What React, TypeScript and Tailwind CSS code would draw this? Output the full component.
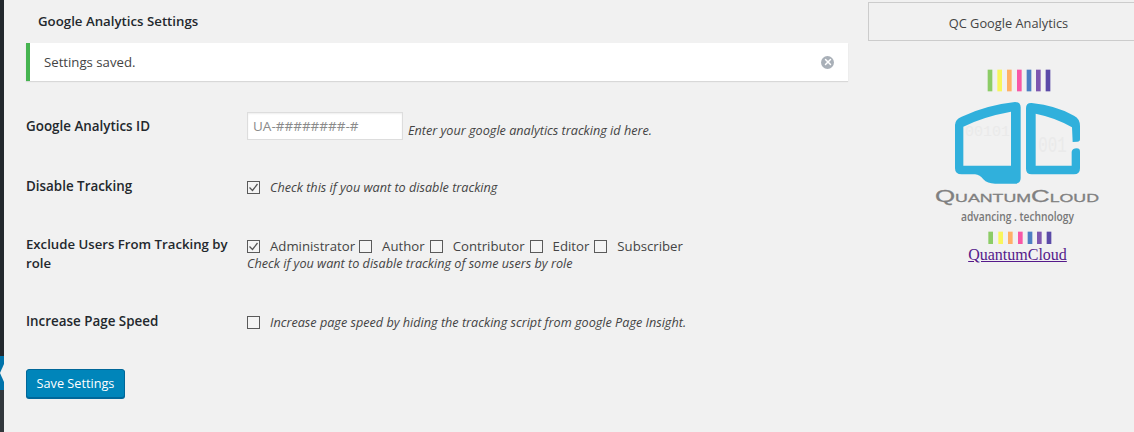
import { X } from "lucide-react";

const font = "font-['Open_Sans','Noto_Sans',sans-serif]";
const barColors = ["#8ccc66", "#f9f65c", "#ffb066", "#f857a6", "#4d7fc4", "#7e57b0", "#5b4aa8"];
const topBars = [263, 292, 321, 351, 380, 408, 437];
const lowBars = [265, 295, 324, 354, 383, 411, 440];

function Checkbox({ checked = false }: { checked?: boolean }) {
  return (
    <span className="flex h-[13px] w-[13px] shrink-0 items-center justify-center border border-[#5a5a5a] bg-[#f4f4f4]">
      {checked && (
        <svg width="11" height="11" viewBox="0 0 11 11" fill="none">
          <path d="M1.5 5.5L4.5 8.5L9.5 2" stroke="#555" strokeWidth="1.3" />
        </svg>
      )}
    </span>
  );
}

function RoleOption({ label, checked, gap }: { label: string; checked?: boolean; gap: string }) {
  return (
    <label className={`flex items-center gap-[10px] ${gap}`}>
      <Checkbox checked={checked} />
      <span>{label}</span>
    </label>
  );
}

function Logo() {
  return (
    <svg width="174" height="178" viewBox="90 201 522 534" className="block">
      {topBars.map((x, i) => (
        <rect key={x} x={x} y="209" width="14" height="65" fill={barColors[i]} />
      ))}
      <text x="195" y="408" fontSize="42" fill="#eaeaea" fontFamily="Liberation Mono, monospace" textLength="135" lengthAdjust="spacingAndGlyphs">00101</text>
      <text x="415" y="455" fontSize="66" fill="#eaeaea" fontFamily="Liberation Mono, monospace" textLength="85" lengthAdjust="spacingAndGlyphs">001</text>
      <path
        fillRule="evenodd"
        fill="#30b0dc"
        d="M165 375Q165 358 185 350Q260 315 345 306Q362 306 362 322L362 535Q362 551 345 551L285 551Q262 551 250 538Q240 525 225 523L185 523Q165 523 165 505ZM190 380Q250 350 333 335L333 497L190 497Z"
      />
      <path
        fill="#30b0dc"
        d="M378 325Q378 308 395 309Q470 317 522 347Q540 356 540 378L540 418Q540 425 532 425L518 426L516 382Q470 354 407 341L407 497L515 497L515 455Q518 445 530 445Q540 445 540 455L540 505Q540 523 522 523L395 523Q378 523 378 506Z"
      />
      <text
        x="105"
        y="607"
        fontSize="48"
        fill="#808080"
        stroke="#808080"
        strokeWidth="0.8"
        fontFamily="Liberation Sans, sans-serif"
        style={{ fontVariant: "small-caps" }}
        textLength="492"
        lengthAdjust="spacingAndGlyphs"
      >
        QuantumCloud
      </text>
      <text
        x="183"
        y="662"
        fontSize="35"
        fontWeight="600"
        fill="#777"
        fontFamily="Open Sans, sans-serif"
        textLength="339"
        lengthAdjust="spacingAndGlyphs"
      >
        advancing . technology
      </text>
      {lowBars.map((x, i) => (
        <rect key={x} x={x} y="695" width="14" height="37" fill={barColors[i]} />
      ))}
    </svg>
  );
}

export default function App() {
  return (
    <div className={`flex h-[432px] w-[1134px] overflow-hidden bg-[#f1f1f1] text-[13.2px] text-[#444] ${font}`}>
      {/* admin menu edge */}
      <div className="flex w-1 shrink-0 flex-col">
        <div className="h-[356px] bg-[#23282d]" />
        <div className="relative h-[34px] bg-[#0073aa]">
          <span className="absolute left-0 top-[8px] h-0 w-0 border-y-[9px] border-r-[4px] border-y-transparent border-r-[#f1f1f1]" />
        </div>
        <div className="flex-1 bg-[#32373c]" />
      </div>

      {/* settings form */}
      <div className="ml-[22px] flex w-[822px] shrink-0 flex-col">
        <h2 className="ml-3 mt-[12px] h-[18px] text-[13.25px] font-semibold leading-[18px] text-[#23282d]">
          Google Analytics Settings
        </h2>
        <div className="mt-[13px] flex h-[38px] items-center justify-between border-l-4 border-[#46b450] bg-white pl-[14px] pr-[14px] shadow-[0_1px_1px_rgba(0,0,0,0.1)]">
          <span className="pt-[2px]">Settings saved.</span>
          <span className="flex h-[13px] w-[13px] items-center justify-center rounded-full bg-[#a9b0b8]">
            <X size={10} strokeWidth={3.5} color="#fff" />
          </span>
        </div>

        <div className="mt-[31px] grid grid-cols-[221px_1fr] items-center">
          <div className="text-[13.4px] font-semibold text-[#23282d]">Google Analytics ID</div>
          <div className="flex items-center">
            <span className="flex h-[28px] w-[156px] items-center border border-[#ddd] bg-white pl-[5px] text-[13.5px] text-[#8a8a8a] shadow-[inset_0_1px_2px_rgba(0,0,0,0.07)]">
              UA-########-#
            </span>
            <em className="ml-[5px] mt-[8px] text-[12.65px]">Enter your google analytics tracking id here.</em>
          </div>
        </div>

        <div className="mt-[38px] grid grid-cols-[221px_1fr] items-center">
          <div className="-mt-[2px] text-[13.4px] font-semibold text-[#23282d]">Disable Tracking</div>
          <div className="flex items-center gap-[10px]">
            <Checkbox checked />
            <em className="text-[12.65px]">Check this if you want to disable tracking</em>
          </div>
        </div>

        <div className="mt-[40px] grid grid-cols-[221px_1fr]">
          <div className="-mt-[2px] text-[13.2px] font-semibold leading-[19px] text-[#23282d]">
            Exclude Users From Tracking by role
          </div>
          <div>
            <div className="flex items-center leading-[19px]">
              <RoleOption label="Administrator" checked gap="mr-[4px]" />
              <RoleOption label="Author" gap="mr-[5px]" />
              <RoleOption label="Contributor" gap="mr-[5px]" />
              <RoleOption label="Editor" gap="mr-[5px]" />
              <RoleOption label="Subscriber" gap="" />
            </div>
            <em className="-mt-[2px] block text-[12.65px] leading-[19px]">Check if you want to disable tracking of some users by role</em>
          </div>
        </div>

        <div className="mt-[40px] grid grid-cols-[221px_1fr] items-center">
          <div className="-mt-[2px] text-[13.4px] font-semibold text-[#23282d]">Increase Page Speed</div>
          <div className="flex items-center gap-[10px]">
            <Checkbox />
            <em className="text-[12.65px]">Increase page speed by hiding the tracking script from google Page Insight.</em>
          </div>
        </div>

        <button className="mt-[37px] h-[29px] w-[99px] rounded-[3px] border border-[#006799] bg-[#0085ba] text-[12.7px] text-white shadow-[0_1px_0_#006799]">
          Save Settings
        </button>
      </div>

      {/* plugin sidebar */}
      <div className="ml-5 flex w-[281px] shrink-0 flex-col">
        <div className="mt-[2px] flex h-[39px] items-center justify-center border border-[#ccc] pt-[5px] text-[12.8px] text-[#444]">
          QC Google Analytics
        </div>
        <div className="ml-[62px] mt-[26px] flex w-[174px] flex-col items-center">
          <Logo />
          <a href="#quantumcloud" className="ml-[1px] mt-[1px] font-['Liberation_Serif',serif] text-[16px] leading-[18px] text-[#551a8b] underline">
            QuantumCloud
          </a>
        </div>
      </div>
    </div>
  );
}
